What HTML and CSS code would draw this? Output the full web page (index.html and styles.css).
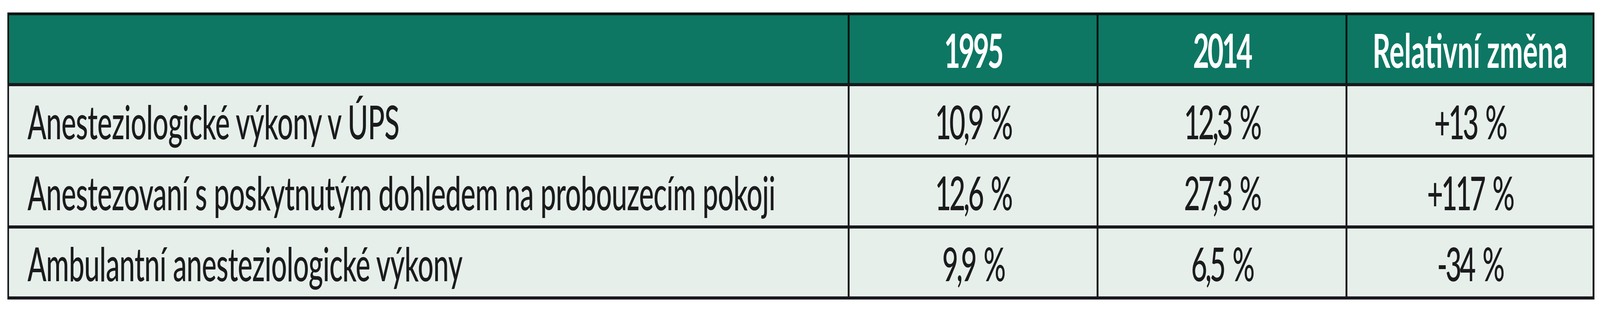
FILE: index.html
```html
<!DOCTYPE html>
<html lang="cs">
<head>
<meta charset="utf-8">
<title>Anesteziologické výkony</title>
<link rel="stylesheet" href="styles.css">
</head>
<body>
<div class="page">
  <div class="table">
    <div class="cell head"></div>
    <div class="cell head"><span class="txt digits">1995</span></div>
    <div class="cell head"><span class="txt digits">2014</span></div>
    <div class="cell head"><span class="txt">Relativní změna</span></div>

    <div class="cell label"><span class="txt">Anesteziologické výkony v ÚPS</span></div>
    <div class="cell num"><span class="txt">10,9 %</span></div>
    <div class="cell num"><span class="txt">12,3 %</span></div>
    <div class="cell num"><span class="txt">+13 %</span></div>

    <div class="cell label"><span class="txt">Anestezovaní s poskytnutým dohledem na probouzecím pokoji</span></div>
    <div class="cell num"><span class="txt">12,6 %</span></div>
    <div class="cell num"><span class="txt">27,3 %</span></div>
    <div class="cell num"><span class="txt">+117 %</span></div>

    <div class="cell label"><span class="txt">Ambulantní anesteziologické výkony</span></div>
    <div class="cell num"><span class="txt">9,9 %</span></div>
    <div class="cell num"><span class="txt">6,5 %</span></div>
    <div class="cell num"><span class="txt">-34 %</span></div>
  </div>
</div>
</body>
</html>
```

FILE: styles.css
```css
html, body {
  margin: 0;
  padding: 0;
  background: #ffffff;
  overflow: hidden;
}

/* The page is drawn at the reference's 6923px design width and fitted
   horizontally into the actual window (4096px wide). */
.page {
  width: 6923px;
  height: 800px;
  box-sizing: border-box;
  padding: 32px 0 0 32px;
  transform: scaleX(0.59165);
  transform-origin: 0 0;
  font-family: "Lato", "Open Sans", "Liberation Sans", sans-serif;
}

.table {
  display: grid;
  grid-template-columns: 3629px 1069px 1069px 1061px;
  grid-template-rows: 174px 175px 174px 174px;
  gap: 8px;
  padding: 7px 8px 8px 7px;
  width: 6867px;
  box-sizing: border-box;
  background: linear-gradient(to bottom, #03130f 0, #03130f 181px, #18191c 181px, #18191c 100%);
}

.cell {
  display: flex;
  align-items: center;
  justify-content: center;
  padding-top: 4px;
  box-sizing: border-box;
  font-size: 120px;
  line-height: 1.2;
  white-space: nowrap;
  min-width: 0;
}

.head {
  background: #0d7763;
  color: #ffffff;
  font-weight: 700;
}

.head .digits {
  letter-spacing: -7px;
}

.label,
.num {
  background: #e6efea;
  color: #1b1b1d;
  font-weight: 500;
}

.label {
  justify-content: flex-start;
  padding-left: 80px;
  letter-spacing: -1px;
}

.num {
  letter-spacing: -8px;
  word-spacing: 14px;
}
```
